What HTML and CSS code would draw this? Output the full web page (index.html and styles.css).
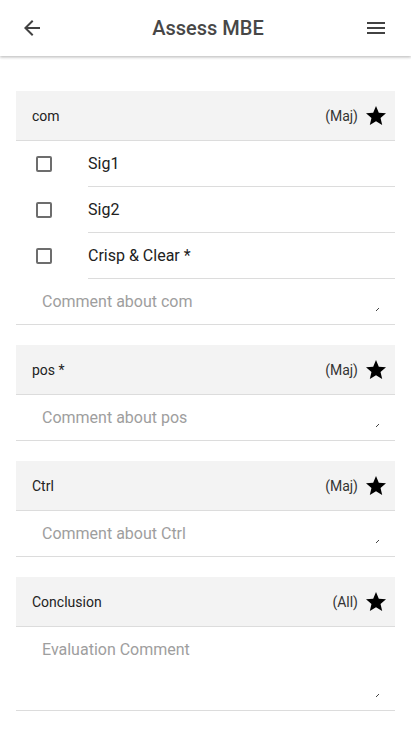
FILE: index.html
```html
<!DOCTYPE html>
<html>
<head>
<meta charset="utf-8">
<link rel="stylesheet" href="styles.css">
</head>
<body>
<header class="appbar">
  <button class="icon-btn" aria-label="Back">
    <svg width="24" height="24" viewBox="0 0 24 24"><path d="M20 11H7.83l5.59-5.59L12 4l-8 8 8 8 1.41-1.41L7.83 13H20v-2z" fill="#424242"/></svg>
  </button>
  <h1 class="title">Assess MBE</h1>
  <button class="icon-btn" aria-label="Menu">
    <svg width="24" height="24" viewBox="0 0 24 24"><path d="M3 18h18v-2H3v2zm0-5h18v-2H3v2zm0-7v2h18V6H3z" fill="#424242"/></svg>
  </button>
</header>

<main class="content">
  <section class="card">
    <div class="card-head">
      <span class="name">com</span>
      <span class="level">(Maj)</span>
      <svg class="star" width="24" height="24" viewBox="0 0 24 24"><path d="M12 17.27L18.18 21l-1.64-7.03L22 9.24l-7.19-.61L12 2 9.19 8.63 2 9.24l5.46 4.73L5.82 21z" fill="#000"/></svg>
    </div>
    <label class="check-row"><span class="box-cell"><span class="box"></span></span><span class="check-label">Sig1</span></label>
    <label class="check-row"><span class="box-cell"><span class="box"></span></span><span class="check-label">Sig2</span></label>
    <label class="check-row"><span class="box-cell"><span class="box"></span></span><span class="check-label">Crisp &amp; Clear *</span></label>
    <div class="comment"><textarea rows="1" placeholder="Comment about com"></textarea></div>
  </section>

  <section class="card">
    <div class="card-head">
      <span class="name">pos *</span>
      <span class="level">(Maj)</span>
      <svg class="star" width="24" height="24" viewBox="0 0 24 24"><path d="M12 17.27L18.18 21l-1.64-7.03L22 9.24l-7.19-.61L12 2 9.19 8.63 2 9.24l5.46 4.73L5.82 21z" fill="#000"/></svg>
    </div>
    <div class="comment"><textarea rows="1" placeholder="Comment about pos"></textarea></div>
  </section>

  <section class="card">
    <div class="card-head">
      <span class="name">Ctrl</span>
      <span class="level">(Maj)</span>
      <svg class="star" width="24" height="24" viewBox="0 0 24 24"><path d="M12 17.27L18.18 21l-1.64-7.03L22 9.24l-7.19-.61L12 2 9.19 8.63 2 9.24l5.46 4.73L5.82 21z" fill="#000"/></svg>
    </div>
    <div class="comment"><textarea rows="1" placeholder="Comment about Ctrl"></textarea></div>
  </section>

  <section class="card">
    <div class="card-head">
      <span class="name">Conclusion</span>
      <span class="level">(All)</span>
      <svg class="star" width="24" height="24" viewBox="0 0 24 24"><path d="M12 17.27L18.18 21l-1.64-7.03L22 9.24l-7.19-.61L12 2 9.19 8.63 2 9.24l5.46 4.73L5.82 21z" fill="#000"/></svg>
    </div>
    <div class="comment"><textarea class="tall" rows="3" placeholder="Evaluation Comment"></textarea></div>
  </section>
</main>
</body>
</html>
```

FILE: styles.css
```css
* { box-sizing: border-box; }
html, body {
  margin: 0;
  padding: 0;
  background: #fff;
  font-family: Roboto, "Liberation Sans", Arial, sans-serif;
  color: #212121;
}
.appbar {
  height: 56px;
  display: grid;
  grid-template-columns: 24px 1fr 24px;
  align-items: center;
  padding: 0 23px 0 20px;
  background: #fff;
  box-shadow: 0 1px 3px rgba(0,0,0,0.22), 0 2px 2px rgba(0,0,0,0.06);
  position: relative;
  z-index: 1;
}
.icon-btn {
  border: 0;
  background: transparent;
  padding: 0;
  width: 24px;
  height: 24px;
  display: flex;
}
.title {
  margin: 0;
  padding-left: 8px;
  text-align: center;
  font-size: 20px;
  font-weight: 500;
  color: #474747;
}
.content {
  padding: 35px 16px 0 16px;
  display: flex;
  flex-direction: column;
  gap: 20px;
}
.card { display: flex; flex-direction: column; }
.card-head {
  height: 50px;
  background: #f3f3f3;
  border-bottom: 1px solid #dcdcdc;
  display: flex;
  align-items: center;
  padding: 0 7px 0 16px;
  font-size: 14px;
  color: #222;
}
.card-head .name { flex: 1; }
.card-head .level { color: #333; margin-right: 6px; }
.star { display: block; }
.check-row {
  display: flex;
  height: 46px;
}
.box-cell {
  width: 72px;
  padding-left: 20px;
  display: flex;
  align-items: center;
  padding-bottom: 1px;
}
.box {
  width: 16px;
  height: 16px;
  border: 2px solid #6d6d6d;
  border-radius: 2px;
}
.check-label {
  flex: 1;
  display: flex;
  align-items: center;
  border-bottom: 1px solid #dcdcdc;
  font-size: 16px;
  color: #212121;
}
.comment {
  position: relative;
  border-bottom: 1px solid #dcdcdc;
  padding: 11px 14px 12px 24px;
  display: flex;
}
.comment::after {
  content: "";
  position: absolute;
  right: 16px;
  bottom: 13px;
  width: 3px;
  height: 3px;
  background: linear-gradient(135deg, transparent 35%, #444 35%, #444 65%, transparent 65%);
}
.comment textarea {
  flex: 1;
  height: 22px;
  border: 0;
  outline: none;
  padding: 3px 2px 1px 2px;
  margin: 0;
  resize: none;
  overflow: hidden;
  font-family: Roboto, "Liberation Sans", Arial, sans-serif;
  font-size: 16px;
  line-height: 18px;
  color: #212121;
  background: transparent;
}
.comment textarea.tall { height: 60px; }
.comment textarea::placeholder { color: #9e9e9e; }
```
